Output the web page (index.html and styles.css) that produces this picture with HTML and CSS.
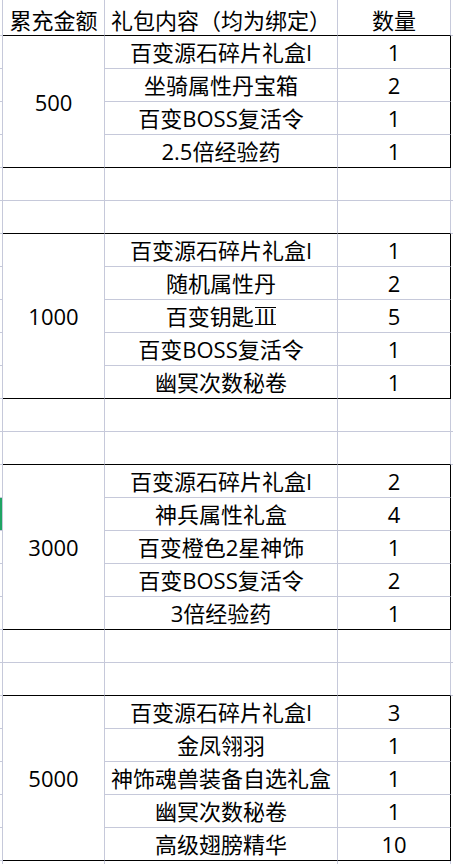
FILE: index.html
```html
<!DOCTYPE html>
<html lang="zh-CN">
<head>
<meta charset="utf-8">
<title>累充礼包</title>
<link rel="stylesheet" href="styles.css">
</head>
<body>
<div class="sheet">
  <!-- header -->
  <div class="s"></div>
  <div class="cell a hd kb">累充金额</div>
  <div class="cell b hd kb">礼包内容（均为绑定）</div>
  <div class="cell c hd kb">数量</div>
  <div class="r g"></div>

  <!-- 500 -->
  <div class="s"></div><div class="cell a kb span4">500</div><div class="cell b">百变源石碎片礼盒I</div><div class="cell c kr">1</div><div class="r"></div>
  <div class="s"></div><div class="cell b">坐骑属性丹宝箱</div><div class="cell c kr">2</div><div class="r"></div>
  <div class="s"></div><div class="cell b">百变BOSS复活令</div><div class="cell c kr">1</div><div class="r"></div>
  <div class="s"></div><div class="cell b kb">2.5倍经验药</div><div class="cell c kr kb">1</div><div class="r"></div>

  <div class="s"></div><div class="cell a"></div><div class="cell b"></div><div class="cell c"></div><div class="r g"></div>
  <div class="s"></div><div class="cell a kb"></div><div class="cell b kb"></div><div class="cell c kb"></div><div class="r g"></div>

  <!-- 1000 -->
  <div class="s"></div><div class="cell a kb span5">1000</div><div class="cell b">百变源石碎片礼盒I</div><div class="cell c kr">1</div><div class="r"></div>
  <div class="s"></div><div class="cell b">随机属性丹</div><div class="cell c kr">2</div><div class="r"></div>
  <div class="s"></div><div class="cell b"><span>百变钥匙<span class="roman">III</span></span></div><div class="cell c kr">5</div><div class="r"></div>
  <div class="s"></div><div class="cell b">百变BOSS复活令</div><div class="cell c kr">1</div><div class="r"></div>
  <div class="s"></div><div class="cell b kb">幽冥次数秘卷</div><div class="cell c kr kb">1</div><div class="r"></div>

  <div class="s"></div><div class="cell a"></div><div class="cell b"></div><div class="cell c"></div><div class="r g"></div>
  <div class="s"></div><div class="cell a kb"></div><div class="cell b kb"></div><div class="cell c kb"></div><div class="r g"></div>

  <!-- 3000 -->
  <div class="s"></div><div class="cell a kb span5">3000</div><div class="cell b">百变源石碎片礼盒I</div><div class="cell c kr">2</div><div class="r"></div>
  <div class="s sel"></div><div class="cell b">神兵属性礼盒</div><div class="cell c kr">4</div><div class="r"></div>
  <div class="s"></div><div class="cell b">百变橙色2星神饰</div><div class="cell c kr">1</div><div class="r"></div>
  <div class="s"></div><div class="cell b">百变BOSS复活令</div><div class="cell c kr">2</div><div class="r"></div>
  <div class="s"></div><div class="cell b kb">3倍经验药</div><div class="cell c kr kb">1</div><div class="r"></div>

  <div class="s"></div><div class="cell a"></div><div class="cell b"></div><div class="cell c"></div><div class="r g"></div>
  <div class="s"></div><div class="cell a kb"></div><div class="cell b kb"></div><div class="cell c kb"></div><div class="r g"></div>

  <!-- 5000 -->
  <div class="s"></div><div class="cell a kb span5">5000</div><div class="cell b">百变源石碎片礼盒I</div><div class="cell c kr">3</div><div class="r"></div>
  <div class="s"></div><div class="cell b">金凤翎羽</div><div class="cell c kr">1</div><div class="r"></div>
  <div class="s"></div><div class="cell b">神饰魂兽装备自选礼盒</div><div class="cell c kr">1</div><div class="r"></div>
  <div class="s"></div><div class="cell b">幽冥次数秘卷</div><div class="cell c kr">1</div><div class="r"></div>
  <div class="s"></div><div class="cell b kb">高级翅膀精华</div><div class="cell c kr kb">10</div><div class="r"></div>

  <!-- partial row below -->
  <div class="s tail"></div><div class="cell a tail"></div><div class="cell b tail"></div><div class="cell c tail"></div><div class="r tail"></div>
</div>
</body>
</html>
```

FILE: styles.css
```css
* {
  box-sizing: border-box;
}

html, body {
  margin: 0;
  padding: 0;
  background: #ffffff;
}

body {
  width: 453px;
  height: 864px;
  overflow: hidden;
  font-family: "Open Sans", "Noto Sans CJK SC", sans-serif;
  font-size: 22px;
  color: #000000;
}

.roman {
  display: inline-block;
  box-sizing: content-box;
  height: 16px;
  line-height: 16px;
  padding: 0 1px 0 2px;
  margin-left: 1px;
  letter-spacing: 0;
  border-top: 1.5px solid #000000;
  border-bottom: 1.5px solid #000000;
  vertical-align: baseline;
}

.sheet {
  display: grid;
  grid-template-columns: 3px 102px 233px 113px 2px;
  grid-template-rows: 36px repeat(25, 33px) 3px;
}

.s {
  grid-column: 1;
  border-right: 1px solid #c6c9da;
  border-bottom: 1px solid #c6c9da;
}

.s.sel {
  background: linear-gradient(to right, #1fa463 0, #1fa463 2px, transparent 2px);
}

.r {
  grid-column: 5;
}

.r.g {
  border-bottom: 1px solid #c6c9da;
}

.cell {
  display: flex;
  align-items: center;
  justify-content: center;
  white-space: nowrap;
  line-height: 1;
  border-right: 1px solid #c6c9da;
  border-bottom: 1px solid #c6c9da;
}

.a { grid-column: 2; }
.b { grid-column: 3; }
.c { grid-column: 4; }

.span4 { grid-row: span 4; }
.span5 { grid-row: span 5; }

.hd {
  padding-top: 4px;
}

.kb {
  border-bottom-color: #000000;
}

.kr {
  border-right-color: #000000;
}

.tail {
  border-bottom: none;
}
```
